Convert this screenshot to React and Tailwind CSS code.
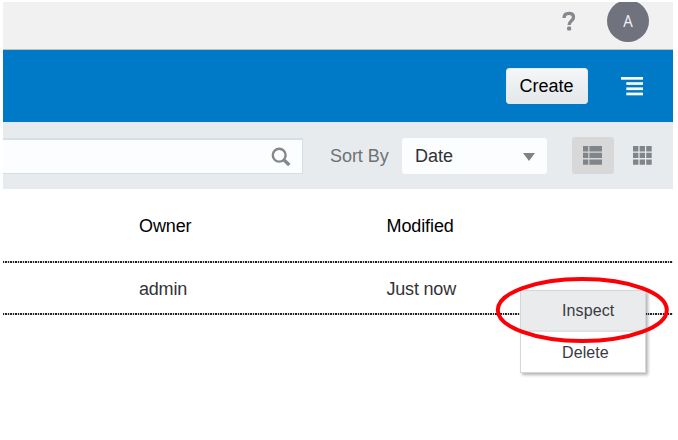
import React from "react";

const dots =
  "h-[2px] w-full shrink-0 bg-[repeating-linear-gradient(90deg,#222628_0px,#222628_1.3px,#d4dade_1.3px,#d4dade_2.5px)]";

function TopBar() {
  return (
    <div className="flex h-[48px] shrink-0 items-start justify-end overflow-hidden border-b border-[#c2bfb6] bg-[#f1f1f1] pr-[24px]">
      <svg className="mt-[9px] mr-[31px]" width="14" height="21" viewBox="0 0 14 21">
        <path d="M2 7C2.1 3.7 4.2 2.4 6.8 2.4C9.7 2.4 11.5 3.8 11.5 6.2C11.5 9.8 7.1 9.6 7.1 14" fill="none" stroke="#85888c" strokeWidth="3.3" />
        <rect x="5.1" y="15.6" width="4" height="3.8" rx="1.2" fill="#85888c" />
      </svg>
      <div className="-mt-[2px] flex h-[42px] w-[42px] shrink-0 items-center justify-center rounded-full bg-[#70727e] font-['Open_Sans',sans-serif] text-[16px] text-[#f4f4f6]">
        <span className="inline-block scale-x-[0.94]">A</span>
      </div>
    </div>
  );
}

function ActionBar() {
  return (
    <div className="flex h-[72px] shrink-0 items-center justify-end bg-[#007ac7] pr-[30px]">
      <button className="h-[36px] w-[82px] rounded-[3px] border border-[#e5eaee] bg-gradient-to-b from-[#f4f6f7] to-[#e4e8eb] pr-[1px] text-[18px] text-black">
        Create
      </button>
      <svg className="ml-[33px]" width="22" height="19" viewBox="0 0 22 19" fill="#f8fcff">
        <rect x="0" y="0" width="22" height="2.7" />
        <rect x="5.3" y="5.2" width="16.7" height="2.7" />
        <rect x="5.3" y="10.4" width="16.7" height="2.7" />
        <rect x="5.3" y="15.6" width="16.7" height="2.7" />
      </svg>
    </div>
  );
}

function Toolbar() {
  return (
    <div className="flex h-[67px] shrink-0 items-center border-t-2 border-[#e3e9ef] bg-[#e7ebee] pb-[2px]">
      <div className="flex h-[36px] w-[300px] items-center justify-end border border-l-0 border-t-2 border-[#d5dfe7] bg-[#fcfdfe] pr-[11px]">
        <svg className="mt-[2px]" width="20" height="20" viewBox="0 0 20 20" fill="none" stroke="#85888b">
          <circle cx="8.2" cy="8.2" r="6.4" strokeWidth="2.4" />
          <path d="M12.7 12.7L18.3 18" strokeWidth="3.4" />
        </svg>
      </div>
      <span className="ml-[27px] w-[72px] pt-[2px] text-[18px] tracking-[-0.05px] text-[#6f7275]">Sort By</span>
      <div className="flex h-[36px] w-[145px] items-center justify-between rounded-[3px] bg-[#fcfdfe] pt-[1px] pr-[12px] pl-[13px] text-[18px] text-[#303234]">
        Date
        <svg className="mt-[2px]" width="12" height="8" viewBox="0 0 12 8">
          <path d="M0 0H12L6 8Z" fill="#7f8387" />
        </svg>
      </div>
      <div className="ml-[25px] flex h-[37px] w-[42px] items-center justify-center rounded-[3px] bg-[#d8d8d8]">
        <svg className="mr-[1px]" width="19" height="19" viewBox="0 0 19 19" fill="#80858a">
          <path d="M0 0h5.3v5.5H0zM6.4 0H19v5.5H6.4zM0 6.8h5.3v5.3H0zM6.4 6.8H19v5.3H6.4zM0 13.5h5.3v5.3H0zM6.4 13.5H19v5.3H6.4z" />
        </svg>
      </div>
      <svg className="ml-[19px]" width="19" height="19" viewBox="0 0 19 19" fill="#80858a">
        <path d="M0 0h5.4v5.5H0zM6.6 0H12v5.5H6.6zM13.2 0h5.5v5.5h-5.5zM0 6.8h5.4v5.3H0zM6.6 6.8H12v5.3H6.6zM13.2 6.8h5.5v5.3h-5.5zM0 13.5h5.4v5.3H0zM6.6 13.5H12v5.3H6.6zM13.2 13.5h5.5v5.3h-5.5z" />
      </svg>
    </div>
  );
}

function RowMenu() {
  return (
    <div className="absolute top-[290px] left-[520px] w-[126px]">
      <div className="flex h-[83px] flex-col border border-[#d5d8da] bg-white text-[16px] tracking-[0.1px] text-[#3a3a42] shadow-[2px_2px_3px_rgba(0,0,0,0.3)]">
        <div className="flex h-[41px] items-center border-b-2 border-[#e0e3e4] bg-[#e9ebec] pl-[41px]">Inspect</div>
        <div className="flex h-[40px] items-center pt-[2px] pl-[41px]">Delete</div>
      </div>
    </div>
  );
}

export default function App() {
  return (
    <div className="relative h-[440px] w-[678px] overflow-hidden bg-white pt-[2px] pl-[3px] font-['Liberation_Sans',Arial,sans-serif]">
      <div className="flex w-[670px] flex-col">
        <TopBar />
        <ActionBar />
        <Toolbar />
        <div className="grid h-[72px] grid-cols-[247.5px_1fr] items-center pt-[2px] pl-[136px] text-[18px] tracking-[-0.1px] text-black">
          <span>Owner</span>
          <span>Modified</span>
        </div>
        <div className={dots} />
        <div className="grid h-[50px] grid-cols-[247.5px_1fr] items-center pt-[2px] pl-[136px] text-[18px] tracking-[-0.2px] text-[#333338]">
          <span>admin</span>
          <span>Just now</span>
        </div>
        <div className={dots} />
      </div>
      <RowMenu />
      <svg className="absolute top-[275px] left-[494px]" width="178" height="70" viewBox="0 0 178 70">
        <ellipse cx="88.3" cy="35" rx="84.5" ry="31" fill="none" stroke="#fb0007" strokeWidth="4" />
      </svg>
    </div>
  );
}
